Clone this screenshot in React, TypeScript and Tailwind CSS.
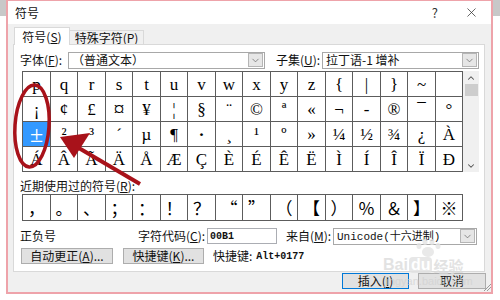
import { ChevronDown, ChevronUp, X } from "lucide-react";

const symbolRows = [
  ["p", "q", "r", "s", "t", "u", "v", "w", "x", "y", "z", "{", "|", "}", "~", ""],
  ["¡", "¢", "£", "¤", "¥", "¦", "§", "¨", "©", "ª", "«", "¬", "-", "®", "¯", "°"],
  ["±", "²", "³", "´", "µ", "¶", "·", "¸", "¹", "º", "»", "¼", "½", "¾", "¿", "À"],
  ["Á", "Â", "Ã", "Ä", "Å", "Æ", "Ç", "È", "É", "Ê", "Ë", "Ì", "Í", "Î", "Ï", "Ð"],
];

// glyphs that the dialog draws bigger than the rest
const bigGlyphs: Record<string, string> = {
  "±": "text-[24px]",
  "¤": "text-[22px]",
  "·": "text-[24px]",
};

const recent = ["，", "。", "、", "；", "：", "！", "？", "“", "”", "（", "【", "）", "％", "＆", "】", "※"];

function DropArrow() {
  return (
    <div className="my-px mr-px flex h-[14px] w-[15px] items-center justify-center border border-[#b5b5b5] bg-[#e6e6e6]">
      <ChevronDown size={11} strokeWidth={1.5} className="text-[#606060]" />
    </div>
  );
}

function Select({ children, className }: { children: React.ReactNode; className: string }) {
  return (
    <div className={`flex h-[17px] items-center justify-between border border-[#a8a8a8] bg-white ${className}`}>
      <div className="pl-[3px] leading-none">{children}</div>
      <DropArrow />
    </div>
  );
}

function Button({ children, className }: { children: React.ReactNode; className: string }) {
  return (
    <div className={`flex h-[16px] items-center justify-center border bg-[#e1e1e1] leading-none ${className}`}>
      {children}
    </div>
  );
}

function Annotations() {
  return (
    <svg className="pointer-events-none absolute left-0 top-0" width="500" height="300">
      <ellipse cx="32" cy="126" rx="17" ry="41" fill="none" stroke="#a8121a" strokeWidth="3.5" transform="rotate(4 32 126)" />
      <line x1="72" y1="144" x2="140" y2="184" stroke="#a8121a" strokeWidth="4" />
      <polygon points="60,137 90,133 74,158" fill="#a8121a" />
      {/* resize grip */}
      <g stroke="#9a9a9a" strokeWidth="1">
        <line x1="484" y1="291" x2="491" y2="284" />
        <line x1="487" y1="291" x2="491" y2="287" />
      </g>
      {/* watermark paw */}
      <g fill="#e4e4e4" opacity="0.8">
        <ellipse cx="428" cy="252" rx="6" ry="5" />
        <ellipse cx="419" cy="246" rx="2.5" ry="3" />
        <ellipse cx="425" cy="242" rx="2.5" ry="3" />
        <ellipse cx="432" cy="242" rx="2.5" ry="3" />
        <ellipse cx="438" cy="246" rx="2.5" ry="3" />
      </g>
    </svg>
  );
}

export default function App() {
  return (
    <div className="relative h-[300px] w-[500px] overflow-hidden bg-white font-['Noto_Sans_CJK_SC',sans-serif] text-[12px] text-[#111]">
      <div className="absolute left-0 top-0 h-[16px] w-[6px] bg-[#c8c8c8]" />
      <div className="absolute right-0 top-0 h-[16px] w-[7px] bg-[#c8c8c8]" />

      <div className="ml-[6px] flex h-[294px] w-[487px] flex-col border-2 border-t border-[#eea3aa] bg-[#f0f0f0]">
        {/* title bar */}
        <div className="flex h-[23px] items-center justify-between bg-white pl-[7px] pr-[12px]">
          <span className="text-[12px]">符号</span>
          <div className="flex items-center gap-[26px]">
            <span className="text-[13px] text-[#333]">?</span>
            <X size={15} strokeWidth={1.2} className="text-[#333]" />
          </div>
        </div>

        {/* tabs */}
        <div className="flex h-[20px] items-end pl-[6px]">
          <div className="relative z-10 -mb-px flex h-[18px] w-[56px] items-center justify-center border border-b-0 border-[#d9d9d9] bg-white">
            符号(<u>S</u>)
          </div>
          <div className="flex h-[14px] w-[74px] items-center justify-center border border-b-0 border-l-0 border-[#d9d9d9] bg-[#f0f0f0]">
            特殊字符(<u>P</u>)
          </div>
        </div>

        {/* panel */}
        <div className="ml-[5px] flex h-[228px] w-[472px] flex-col border border-[#d9d9d9] bg-white pl-[6px]">
          <div className="mt-[6px] flex items-center">
            <span className="w-[48px]">字体(<u>F</u>):</span>
            <Select className="w-[197px]">（普通文本）</Select>
            <span className="ml-[11px] w-[46px]">子集(<u>U</u>):</span>
            <Select className="w-[157px]">拉丁语-1 增补</Select>
          </div>

          <div className="mt-[2px] flex">
            <div className="ml-[2px] grid w-[441px] grid-cols-[repeat(8,28px_27px)] border-l border-t border-[#5c5c5c] font-['Liberation_Serif',serif] text-[17px] leading-none">
              {symbolRows.map((row, r) =>
                row.map((ch, c) => {
                  const selected = r === 2 && c === 0;
                  return (
                    <div
                      key={`${r}-${c}`}
                      className={`flex h-[25px] items-center justify-center border-b border-r border-[#5c5c5c] ${
                        selected ? "bg-[#3399ff] text-white" : "bg-white text-black"
                      } ${bigGlyphs[ch] ?? ""}`}
                    >
                      {ch}
                    </div>
                  );
                })
              )}
            </div>
            <div className="flex h-[101px] w-[16px] flex-col items-center bg-[#f0f0f0]">
              <div className="flex h-[13px] items-center">
                <ChevronUp size={10} strokeWidth={2.5} className="text-[#505050]" />
              </div>
              <div className="h-[12px] w-[13px] bg-[#cdcdcd]" />
              <div className="flex-1" />
              <div className="flex h-[13px] items-center">
                <ChevronDown size={10} strokeWidth={2.5} className="text-[#505050]" />
              </div>
            </div>
          </div>

          <div className="mt-[7px] leading-[14px]">近期使用过的符号(<u>R</u>):</div>

          <div className="ml-[2px] mt-px grid w-[441px] grid-cols-[repeat(8,28px_27px)] border-l border-t border-[#5c5c5c] font-['Noto_Sans_CJK_SC',sans-serif] text-[17px] leading-none">
            {recent.map((ch, i) => (
              <div key={i} className="flex h-[26px] items-center justify-center border-b border-r border-[#5c5c5c] bg-white text-black">
                {ch}
              </div>
            ))}
          </div>

          <div className="mt-[7px] flex h-[16px] items-center">
            <span className="w-[118px]">正负号</span>
            <span className="w-[69px]">字符代码(<u>C</u>):</span>
            <div className="flex h-[16px] w-[70px] items-center border border-[#abadb3] bg-white pl-[2px] font-['Liberation_Mono',monospace] text-[10px] font-bold">
              00B1
            </div>
            <span className="ml-[9px] w-[47px]">来自(<u>M</u>):</span>
            <Select className="h-[16px] w-[144px]">
              <span className="font-['Liberation_Mono','Noto_Sans_CJK_SC',monospace] text-[11px]">Unicode(十六进制)</span>
            </Select>
          </div>

          <div className="mt-[3px] flex items-center">
            <Button className="ml-px w-[92px] border-[#adadad]">
              自动更正(<u>A</u>)...
            </Button>
            <Button className="ml-[10px] w-[81px] border-[#adadad]">
              快捷键(<u>K</u>)...
            </Button>
            <span className="ml-[9px]">快捷键:</span>
            <span className="ml-[4px] font-['Liberation_Mono',monospace] text-[10px] font-bold">Alt+0177</span>
          </div>
        </div>

        {/* bottom buttons */}
        <div className="mt-px flex justify-end gap-[9px] pr-[5px]">
          <Button className="w-[67px] border-[#0078d7]">
            插入(<u>I</u>)
          </Button>
          <Button className="w-[68px] border-[#adadad]">取消</Button>
        </div>
      </div>

      <Annotations />

      {/* Baidu watermark */}
      <div className="pointer-events-none absolute left-[383px] top-[257px] flex items-center gap-[1px] font-['Liberation_Sans',sans-serif] text-[16px] font-bold leading-none text-[#dcdcdc] opacity-80">
        <span>Bai</span>
        <span className="rounded-[4px] bg-[#e2e2e2] px-[2px] text-white">du</span>
        <span className="font-['Noto_Sans_CJK_SC',sans-serif] text-[15px]">经验</span>
      </div>
      <div className="pointer-events-none absolute left-[384px] top-[276px] font-['Liberation_Sans',sans-serif] text-[11px] leading-none text-[#d0d0d0] opacity-70">
        jingyan.baidu.com
      </div>
    </div>
  );
}
